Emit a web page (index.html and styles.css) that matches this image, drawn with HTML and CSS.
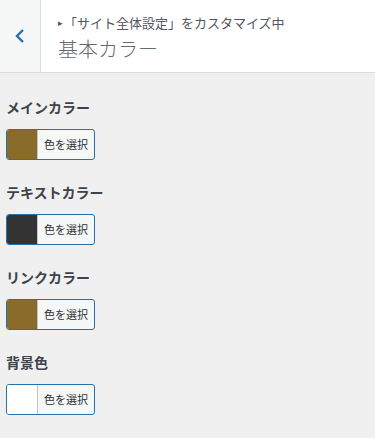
FILE: index.html
```html
<!DOCTYPE html>
<html lang="ja">
<head>
  <meta charset="UTF-8" />
  <meta name="viewport" content="width=device-width, initial-scale=1.0"/>
  <title>基本カラー</title>
  <link rel="stylesheet" href="styles.css">
</head>
<body>
  <header class="section-head">
    <button class="back-btn" aria-label="戻る">
      <svg width="12" height="16" viewBox="0 0 12 16"><path d="M9 2 L3 8 L9 14" fill="none" stroke="#2271b1" stroke-width="2.4"/></svg>
    </button>
    <div class="section-title">
      <span class="crumb"><span class="arrow">▸</span>「サイト全体設定」をカスタマイズ中</span>
      <h3>基本カラー</h3>
    </div>
  </header>

  <ul class="controls">
    <li class="control">
      <span class="control-label">メインカラー</span>
      <button class="color-result"><span class="swatch" style="background:#8b6b2c"></span><span class="result-text">色を選択</span></button>
    </li>
    <li class="control">
      <span class="control-label">テキストカラー</span>
      <button class="color-result"><span class="swatch" style="background:#333333"></span><span class="result-text">色を選択</span></button>
    </li>
    <li class="control">
      <span class="control-label">リンクカラー</span>
      <button class="color-result"><span class="swatch" style="background:#8b6b2c"></span><span class="result-text">色を選択</span></button>
    </li>
    <li class="control">
      <span class="control-label">背景色</span>
      <button class="color-result"><span class="swatch" style="background:#ffffff"></span><span class="result-text">色を選択</span></button>
    </li>
  </ul>
</body>
</html>
```

FILE: styles.css
```css
body {
  margin: 0;
  background: #f0f0f1;
  font-family: "Noto Sans CJK JP", "Noto Sans", sans-serif;
  color: #50575e;
}

.section-head {
  display: flex;
  height: 72px;
  background: #fff;
  border-bottom: 1px solid #dcdcde;
}

.back-btn {
  width: 41px;
  border: none;
  border-right: 1px solid #dcdcde;
  background: #f6f7f7;
  padding: 0;
  display: flex;
  align-items: center;
  justify-content: center;
}

.section-title {
  padding: 12px 0 0 17px;
}

.crumb {
  display: block;
  font-size: 13px;
  line-height: 22px;
  color: #50575e;
}

.crumb .arrow {
  font-size: 9px;
  margin-right: 1px;
  vertical-align: 2px;
}

.section-title h3 {
  margin: 0;
  font-size: 20px;
  font-weight: 300;
  line-height: 30px;
  color: #646970;
}

.controls {
  list-style: none;
  margin: 0;
  padding: 24px 6px 0;
}

.control {
  display: flex;
  flex-direction: column;
  align-items: flex-start;
  margin-bottom: 22px;
}

.control-label {
  font-size: 14px;
  font-weight: 700;
  line-height: 20px;
  color: #3c434a;
  margin-bottom: 12px;
}

.color-result {
  display: flex;
  height: 31px;
  padding: 0;
  border: 1px solid #2271b1;
  border-radius: 3px;
  background: #f6f7f7;
  overflow: hidden;
  font-family: inherit;
}

.swatch {
  width: 30px;
  height: 100%;
}

.result-text {
  border-left: 1px solid #c3c4c7;
  padding: 0 6px 0 6px;
  font-size: 11px;
  line-height: 29px;
  color: #2c3338;
}
```
